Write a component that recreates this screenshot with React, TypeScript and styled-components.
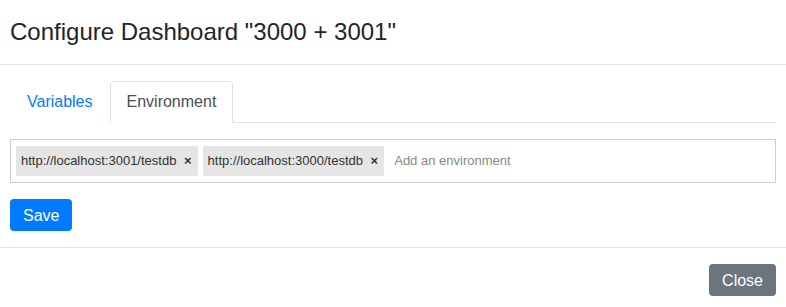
import React, { useState } from 'react';
import styled, { createGlobalStyle } from 'styled-components';

const Global = createGlobalStyle`
  html, body { margin: 0; padding: 0; background: #fff; }
  body { font-family: "Liberation Sans", Arial, sans-serif; color: #212529; }
  * { box-sizing: border-box; }
`;

const Modal = styled.div`
  width: 786px;
  display: flex;
  flex-direction: column;
`;

const Header = styled.div`
  padding: 16px 10px;
  border-bottom: 1px solid #dee2e6;
`;

const Title = styled.h5`
  margin: 0;
  font-size: 24px;
  font-weight: 400;
  line-height: 32px;
`;

const Body = styled.div`
  padding: 16px 10px;
  display: flex;
  flex-direction: column;
  align-items: flex-start;
`;

const Nav = styled.div`
  display: flex;
  align-self: stretch;
  border-bottom: 1px solid #dee2e6;
  margin-bottom: 16px;
`;

const Tab = styled.button<{ $active?: boolean }>`
  font: inherit;
  font-size: 16px;
  line-height: 24px;
  padding: 8px 16px;
  margin-bottom: -1px;
  background: #fff;
  cursor: pointer;
  border: 1px solid ${p => (p.$active ? '#dee2e6' : 'transparent')};
  border-bottom-color: ${p => (p.$active ? '#fff' : 'transparent')};
  border-radius: 4px 4px 0 0;
  color: ${p => (p.$active ? '#495057' : '#007bff')};
`;

const TagsBox = styled.div`
  align-self: stretch;
  display: flex;
  flex-wrap: wrap;
  align-items: flex-start;
  border: 1px solid #ccc;
  padding: 6px 0 1px 5px;
  margin-bottom: 16px;
`;

const Tag = styled.span`
  background: #e5e5e5;
  border-radius: 2px;
  color: #333;
  font-size: 13px;
  line-height: 20px;
  padding: 5px;
  margin: 0 5px 5px 0;
`;

const Remove = styled.a`
  cursor: pointer;
  font-weight: bold;
  color: #333;
  margin-left: 4px;
  margin-right: 1px;
`;

const Input = styled.input`
  border: 0;
  outline: none;
  background: transparent;
  font-family: inherit;
  font-size: 13px;
  line-height: 20px;
  padding: 5px;
  margin-bottom: 5px;
  width: 200px;
  color: #777;
  &::placeholder { color: #888; }
`;

const Button = styled.button<{ $variant: 'primary' | 'secondary' }>`
  font: inherit;
  font-size: 16px;
  line-height: 22px;
  padding: 5px 12px 3px;
  border: 1px solid transparent;
  border-radius: 4px;
  color: #fff;
  cursor: pointer;
  background: ${p => (p.$variant === 'primary' ? '#007bff' : '#6c757d')};
`;

const Footer = styled.div`
  border-top: 1px solid #dee2e6;
  padding: 16px 10px;
  display: flex;
  justify-content: flex-end;
`;

export default function App() {
  const [tab, setTab] = useState('env');
  const [tags, setTags] = useState(['http://localhost:3001/testdb', 'http://localhost:3000/testdb']);
  return (
    <Modal>
      <Global />
      <Header>
        <Title>Configure Dashboard "3000 + 3001"</Title>
      </Header>
      <Body>
        <Nav>
          <Tab $active={tab === 'vars'} onClick={() => setTab('vars')}>Variables</Tab>
          <Tab $active={tab === 'env'} onClick={() => setTab('env')}>Environment</Tab>
        </Nav>
        <TagsBox>
          {tags.map(t => (
            <Tag key={t}>
              {t}
              <Remove onClick={() => setTags(tags.filter(x => x !== t))}> ×</Remove>
            </Tag>
          ))}
          <Input placeholder="Add an environment" />
        </TagsBox>
        <Button $variant="primary">Save</Button>
      </Body>
      <Footer>
        <Button $variant="secondary">Close</Button>
      </Footer>
    </Modal>
  );
}
